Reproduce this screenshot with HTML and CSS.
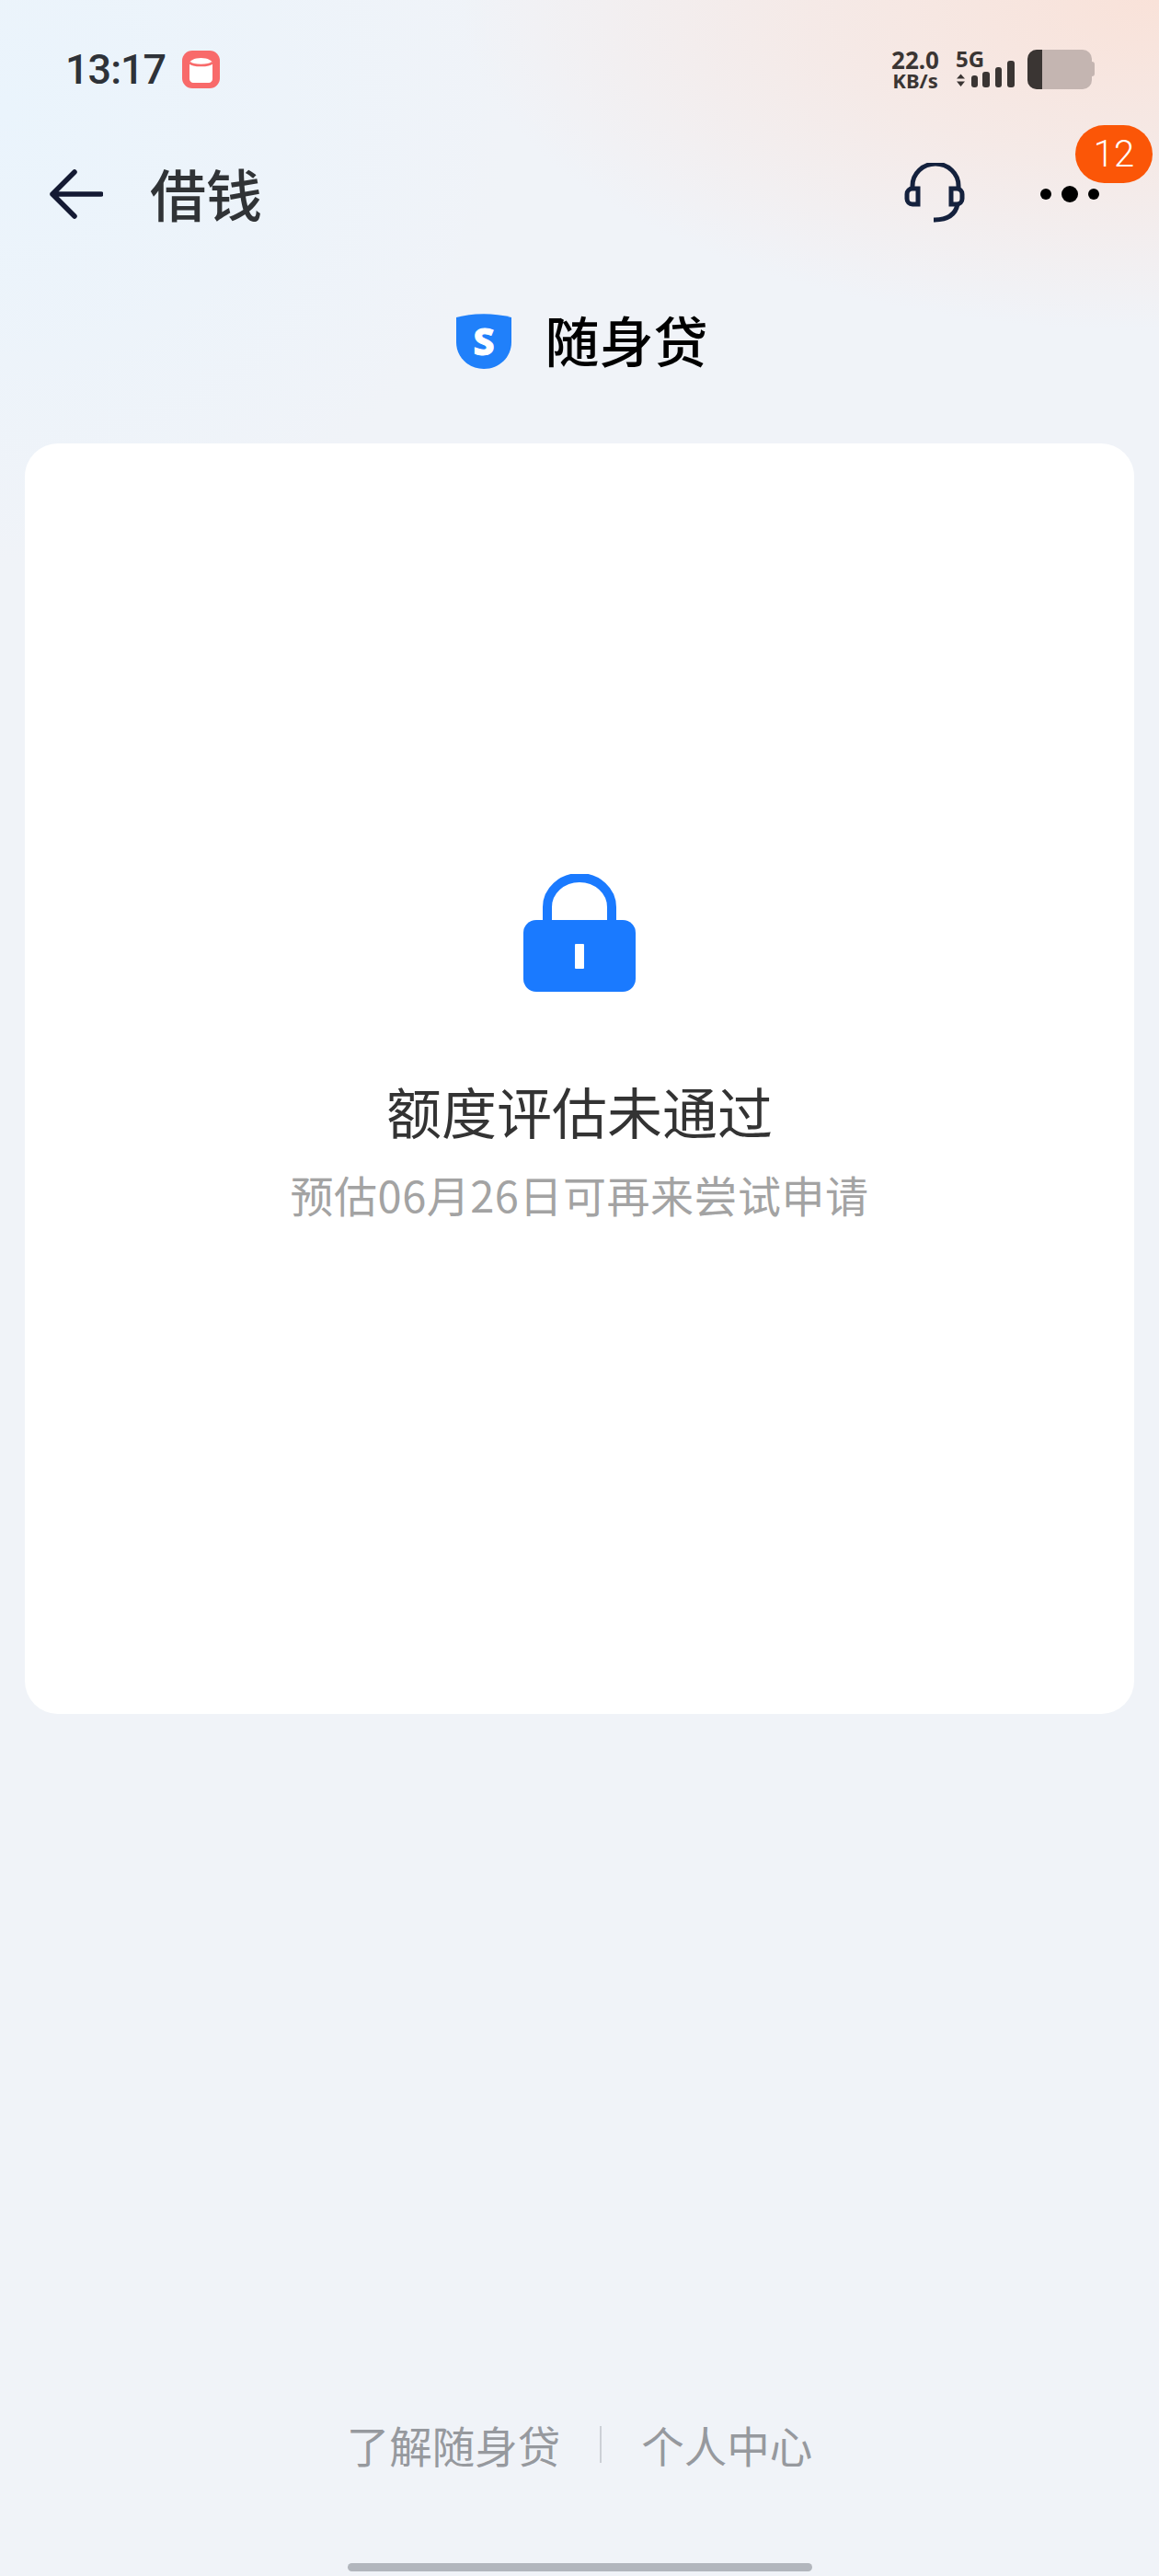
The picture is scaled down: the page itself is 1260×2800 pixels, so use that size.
FILE: index.html
```html
<!DOCTYPE html>
<html lang="zh-CN">
<head>
    <meta charset="UTF-8">
    <meta name="viewport" content="width=device-width, initial-scale=1.0">
    <title>借钱</title>
    <link rel="stylesheet" href="styles.css">
</head>
<body>
    <div class="page">
        <div class="status-bar">
            <div class="status-left">
                <span class="time">13:17</span>
                <svg class="app-icon" width="41" height="41" viewBox="0 0 41 41">
                    <rect width="41" height="41" rx="11" fill="#f86a6a"/>
                    <path d="M8 14c0-3 5-6 12.500-6S33 11 33 14v17c0 2-2 4-4 4H12c-2 0-4-2-4-4z" fill="#fff"/>
                    <path d="M8 13c4 4 21 4 25 0" fill="none" stroke="#f86a6a" stroke-width="2.500"/>
                </svg>
            </div>
            <div class="status-right">
                <div class="net-speed">
                    <span class="speed-value">22.0</span>
                    <span class="speed-unit">KB/s</span>
                </div>
                <div class="signal">
                    <span class="signal-label">5G</span>
                    <svg class="signal-bars" width="64" height="30" viewBox="0 0 64 30">
                        <path d="M1 19.500L5.500 14.500 10 19.500zM1 22.500L5.500 28 10 22.500z" fill="#3a3533"/>
                        <rect x="17" y="16" width="7" height="13" rx="3" fill="#3a3533"/>
                        <rect x="29" y="12" width="8" height="17" rx="3" fill="#3a3533"/>
                        <rect x="43" y="7" width="7" height="22" rx="3" fill="#3a3533"/>
                        <rect x="56" y="0" width="8" height="29" rx="3" fill="#3a3533"/>
                    </svg>
                </div>
                <div class="battery">
                    <div class="battery-body">
                        <div class="battery-level"></div>
                    </div>
                    <div class="battery-nub"></div>
                </div>
            </div>
        </div>

        <div class="nav-bar">
            <div class="nav-left">
                <svg width="60" height="54" viewBox="0 0 60 54">
                    <path d="M29 3L5 27l24 24M5 27h53" fill="none" stroke="#141a33" stroke-width="5.500" stroke-linecap="round" stroke-linejoin="round"/>
                </svg>
                <span class="nav-title">借钱</span>
            </div>
            <div class="nav-right">
                <svg class="headset" width="68" height="68" viewBox="0 0 68 68">
                    <path d="M9 27V25a24 23 0 0 1 50 0v2" fill="none" stroke="#14213d" stroke-width="5"/>
                    <path d="M15 28H9a6 6 0 0 0-6 6v5a6 6 0 0 0 6 6h6zM51 28h6a6 6 0 0 1 6 6v5a6 6 0 0 1-6 6h-6z" fill="none" stroke="#14213d" stroke-width="5"/>
                    <path d="M58 45c-2 10-10 17-26 17" fill="none" stroke="#14213d" stroke-width="5"/>
                </svg>
                <div class="more-dots">
                    <span class="dot"></span>
                    <span class="dot dot-big"></span>
                    <span class="dot"></span>
                </div>
            </div>
            <span class="badge">12</span>
        </div>

        <div class="brand">
            <svg width="60" height="60" viewBox="0 0 60 60">
                <path d="M0 4c20-5 40-5 60 0v27c0 16-13 29-30 29S0 47 0 31z" fill="#2080fa"/>
                <text class="brand-s" x="30" y="44.500" text-anchor="middle">S</text>
            </svg>
            <span class="brand-name">随身贷</span>
        </div>

        <div class="card">
            <svg class="lock" width="122" height="128" viewBox="0 0 122 128">
                <path d="M26 56V36a35 32 0 0 1 70 0v20" fill="none" stroke="#1a7aff" stroke-width="10"/>
                <rect x="0" y="50" width="122" height="78" rx="14" fill="#1a7aff"/>
                <rect x="56" y="76" width="10" height="27" rx="1" fill="#fff"/>
            </svg>
            <h2 class="card-title">额度评估未通过</h2>
            <p class="card-text">预估06月26日可再来尝试申请</p>
        </div>

        <div class="footer">
            <a class="footer-link" href="#">了解随身贷</a>
            <span class="footer-line"></span>
            <a class="footer-link" href="#">个人中心</a>
        </div>
        <div class="home-bar"></div>
    </div>
</body>
</html>
```

FILE: styles.css
```css
body {
    margin: 0;
    font-family: "Noto Sans CJK SC", "Noto Sans", sans-serif;
    background-color: #f0f3f8;
}

.page {
    position: relative;
    display: flex;
    flex-direction: column;
    height: 2800px;
    background-color: #f0f3f8;
    background-image:
        radial-gradient(ellipse 760px 360px at 100% 0, #f9e2d9 0%, rgba(249, 226, 217, 0.55) 50%, rgba(249, 226, 217, 0) 100%),
        radial-gradient(ellipse 560px 500px at 0 120px, #eaf4fc 0%, rgba(234, 244, 252, 0.55) 50%, rgba(234, 244, 252, 0) 100%);
}

.status-bar {
    display: flex;
    justify-content: space-between;
    align-items: center;
    height: 150px;
    padding: 0 70px 0 71px;
    box-sizing: border-box;
}

.status-left {
    display: flex;
    align-items: center;
    gap: 18px;
}

.time {
    font-family: Roboto, sans-serif;
    font-size: 45px;
    font-weight: 500;
    letter-spacing: -1px;
    color: #2e3238;
}

.status-right {
    display: flex;
    align-items: center;
    gap: 14px;
}

.net-speed {
    display: flex;
    flex-direction: column;
    align-items: center;
    width: 52px;
    margin-right: 4px;
    color: #3a3533;
    font-family: "Noto Sans", sans-serif;
    font-weight: 700;
}

.speed-value {
    font-size: 26px;
    line-height: 24px;
}

.speed-unit {
    font-size: 22px;
    line-height: 20px;
}

.signal {
    position: relative;
    width: 64px;
    height: 42px;
}

.signal-label {
    position: absolute;
    left: 0;
    top: -3px;
    font-family: "Noto Sans", sans-serif;
    font-size: 24px;
    line-height: 26px;
    font-weight: 700;
    color: #3a3533;
}

.signal-bars {
    position: absolute;
    left: 0;
    bottom: 0;
}

.battery {
    display: flex;
    align-items: center;
}

.battery-body {
    width: 70px;
    height: 43px;
    border-radius: 10px;
    background-color: #c4b5b1;
    overflow: hidden;
}

.battery-level {
    width: 16px;
    height: 100%;
    background-color: #3a3533;
}

.battery-nub {
    width: 3px;
    height: 16px;
    border-radius: 0 3px 3px 0;
    background-color: #c4b5b1;
}

.nav-bar {
    position: relative;
    display: flex;
    justify-content: space-between;
    align-items: center;
    height: 122px;
    padding: 0 65px 0 52px;
}

.nav-left {
    display: flex;
    align-items: center;
    gap: 51px;
}

.nav-title {
    margin-top: -4px;
    font-size: 61px;
    font-weight: 500;
    color: #303336;
}

.nav-right {
    display: flex;
    align-items: center;
    gap: 80px;
}

.more-dots {
    display: flex;
    align-items: center;
    gap: 11px;
}

.dot {
    width: 12px;
    height: 12px;
    border-radius: 50%;
    background-color: #000;
}

.dot-big {
    width: 18px;
    height: 18px;
}

.badge {
    position: absolute;
    right: 7px;
    top: -14px;
    width: 84px;
    height: 63px;
    border-radius: 32px;
    background-color: #fb5607;
    color: #fff;
    font-family: Roboto, sans-serif;
    font-size: 40px;
    font-weight: 300;
    line-height: 63px;
    text-align: center;
}

.brand {
    display: flex;
    justify-content: center;
    align-items: center;
    gap: 36px;
    height: 198px;
    padding-left: 6px;
}

.brand-s {
    font-family: "Noto Sans", sans-serif;
    font-size: 41px;
    font-weight: 800;
    fill: #fff;
    stroke: #fff;
    stroke-width: 1px;
}

.brand-name {
    margin-top: -6px;
    font-size: 59px;
    font-weight: 500;
    color: #000;
}

.card {
    display: flex;
    flex-direction: column;
    align-items: center;
    height: 1381px;
    margin: 12px 27px 0;
    padding-top: 468px;
    box-sizing: border-box;
    background-color: #fff;
    border-radius: 36px;
}

.card-title {
    margin: 87px 0 0;
    font-size: 60px;
    line-height: 84px;
    font-weight: 400;
    color: #333;
}

.card-text {
    margin: 16px 0 0;
    font-size: 47px;
    line-height: 66px;
    font-weight: 400;
    letter-spacing: 0.5px;
    color: #a3a3a3;
}

.footer {
    display: flex;
    justify-content: center;
    align-items: center;
    gap: 43px;
    margin-top: auto;
    margin-bottom: 96px;
}

.footer-link {
    font-size: 46.500px;
    line-height: 66px;
    font-weight: 400;
    color: #96999e;
    text-decoration: none;
}

.footer-line {
    width: 2px;
    height: 40px;
    background-color: #ccd0d6;
}

.home-bar {
    width: 505px;
    height: 9px;
    margin: 0 auto 5px;
    border-radius: 5px;
    background-color: #b2b6bd;
}
```
